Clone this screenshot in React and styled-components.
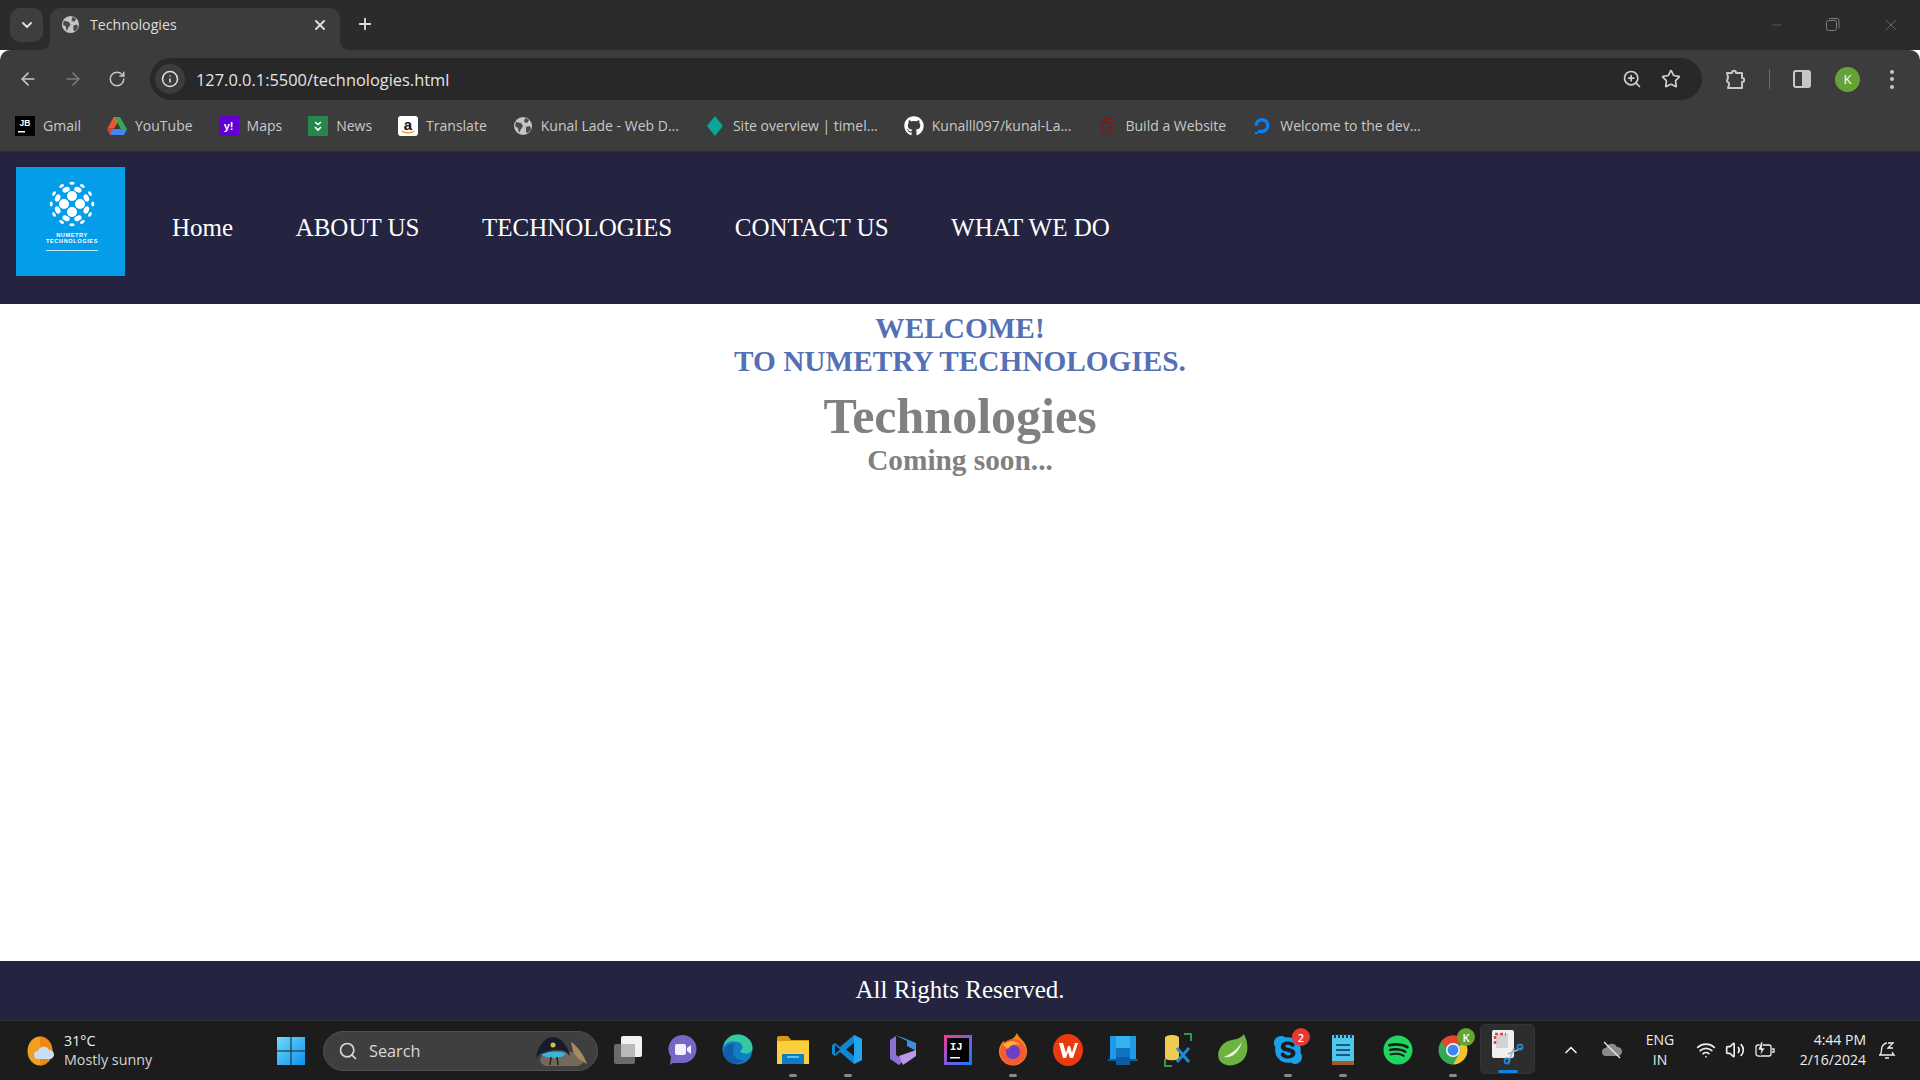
import styled, { createGlobalStyle } from "styled-components";
import {
  ArrowLeft,
  ArrowRight,
  RotateCw,
  Info,
  ZoomIn,
  Star,
  Plus,
  X,
  ChevronDown,
  ChevronUp,
  Search,
  Wifi,
  Volume2,
  Minus,
} from "lucide-react";
import { FaGithub, FaSpotify, FaSkype } from "react-icons/fa";

const GlobalStyle = createGlobalStyle`
  html, body { margin: 0; padding: 0; background: #fff; }
  * { box-sizing: border-box; }
`;

const UI_FONT = `"Open Sans", "Noto Sans", sans-serif`;
const NAVY = "#242440";

const Page = styled.div`
  width: 1920px;
  height: 1080px;
  display: flex;
  flex-direction: column;
  overflow: hidden;
  font-family: "Liberation Serif", serif;
`;

/* browser chrome */
const TabStrip = styled.div`
  height: 50px;
  background: #2b2b2b;
  display: flex;
  align-items: flex-end;
  padding-left: 10px;
  color: #dcdcdc;
  font-family: ${UI_FONT};
`;
const TabListButton = styled.div`
  width: 33px;
  height: 34px;
  margin: 0 7px 8px 0;
  border-radius: 10px;
  background: #3e3e3e;
  display: flex;
  align-items: center;
  justify-content: center;
`;
const Tab = styled.div`
  position: relative;
  width: 290px;
  height: 42px;
  background: #3c3c3c;
  border-radius: 11px 11px 0 0;
  display: flex;
  align-items: center;
  padding: 0 12px 9px 11px;
  gap: 10px;
  font-size: 14.2px;
  &::before,
  &::after {
    content: "";
    position: absolute;
    bottom: 0;
    width: 10px;
    height: 10px;
  }
  &::before {
    left: -10px;
    background: radial-gradient(circle at 0 0, transparent 10px, #3c3c3c 10.5px);
  }
  &::after {
    right: -10px;
    background: radial-gradient(circle at 100% 0, transparent 10px, #3c3c3c 10.5px);
  }
`;
const TabTitle = styled.span`
  flex: 1;
`;
const NewTab = styled.div`
  margin: 0 0 17px 16px;
  display: flex;
`;
const WindowControls = styled.div`
  margin: 0 20px 16px auto;
  display: flex;
  align-items: center;
  gap: 42px;
  color: #7d7d7d;
`;
const Toolbar = styled.div`
  height: 52px;
  background: #3c3c3c;
  border-radius: 10px 10px 0 0;
  display: flex;
  align-items: center;
  padding: 0 26px 0 18px;
  color: #c7c7c7;
`;
const NavButtons = styled.div`
  display: flex;
  align-items: center;
  gap: 25px;
  margin: 5px 24px 0 0;
`;
const Omnibox = styled.div`
  flex: 1;
  height: 42px;
  margin-top: 6px;
  border-radius: 21px;
  background: #282828;
  display: flex;
  align-items: center;
  padding: 0 21px 0 5px;
  font-family: ${UI_FONT};
  font-size: 16.4px;
  color: #e4e4e4;
`;
const InfoChip = styled.div`
  width: 30px;
  height: 30px;
  border-radius: 50%;
  background: #3c3c3c;
  display: flex;
  align-items: center;
  justify-content: center;
  margin-right: 11px;
`;
const OmniboxEnd = styled.div`
  margin-left: auto;
  display: flex;
  align-items: center;
  gap: 19px;
`;
const ToolbarEnd = styled.div`
  display: flex;
  align-items: center;
  margin: 6px 0 0 23px;
`;
const Divider = styled.div`
  width: 1px;
  height: 20px;
  margin: 0 23px;
  background: #686868;
`;
const Avatar = styled.div`
  width: 25px;
  height: 25px;
  margin: 0 30px 0 24px;
  border-radius: 50%;
  background: #65a338;
  color: #fff;
  font: 13px ${UI_FONT};
  display: flex;
  align-items: center;
  justify-content: center;
`;
const Dots = styled.div`
  display: flex;
  flex-direction: column;
  gap: 3.5px;
  span {
    width: 4px;
    height: 4px;
    border-radius: 50%;
    background: #c7c7c7;
  }
`;
const BookmarkBar = styled.div`
  height: 50px;
  background: #3c3c3c;
  display: flex;
  align-items: center;
  padding: 0 0 2px 15px;
  gap: 26px;
  font-family: ${UI_FONT};
  font-size: 14px;
  color: #c9c9c9;
  border-bottom: 1px solid #2d2d2d;
`;
const Bookmark = styled.div`
  display: flex;
  align-items: center;
  gap: 8px;
  white-space: nowrap;
`;
const Favicon = styled.div`
  width: 20px;
  height: 20px;
  flex: none;
  display: flex;
  align-items: center;
  justify-content: center;
  border-radius: ${(p) => p.$radius || 0}px;
  background: ${(p) => p.$bg || "transparent"};
  color: ${(p) => p.$color || "#fff"};
  font: 700 11px "Liberation Sans", sans-serif;
`;

/* the site */
const SiteNav = styled.nav`
  height: 152px;
  flex: none;
  background: ${NAVY};
  display: flex;
  align-items: flex-start;
  padding: 15px 0 0 16px;
`;
const LogoBox = styled.div`
  width: 109px;
  height: 109px;
  background: #049de9;
  display: flex;
  flex-direction: column;
  align-items: center;
  padding: 14px 0 0 3px;
  color: #fff;
  font: 700 5.6px/6.4px "Liberation Sans", sans-serif;
  letter-spacing: 0.6px;
  text-align: center;
`;
const LogoRule = styled.div`
  width: 52px;
  height: 1px;
  margin-top: 5px;
  background: #bfe6fb;
`;
const LogoText = styled.div`
  margin-top: 5px;
`;
const NavLinks = styled.div`
  display: flex;
  gap: 62.5px;
  margin: 46px 0 0 47px;
  font-size: 25px;
  line-height: 30px;
  color: #fff;
`;
const Main = styled.main`
  flex: 1;
  background: #fff;
  text-align: center;
  padding-top: 8px;
`;
const Welcome = styled.h2`
  margin: 0;
  font-size: 29.3px;
  line-height: 33px;
  font-weight: 700;
  color: #5570b5;
`;
const Title = styled.h1`
  margin: 11px 0 0;
  font-size: 50px;
  line-height: 54px;
  font-weight: 700;
  color: #808080;
`;
const Subtitle = styled.h3`
  margin: 0;
  font-size: 29.3px;
  line-height: 35px;
  font-weight: 700;
  color: #808080;
`;
const SiteFooter = styled.footer`
  height: 59px;
  flex: none;
  background: ${NAVY};
  color: #fff;
  font-size: 25px;
  display: flex;
  align-items: center;
  justify-content: center;
  padding-bottom: 2px;
`;

/* windows taskbar */
const Taskbar = styled.div`
  height: 60px;
  flex: none;
  background: #1c1c1c;
  border-top: 1px solid #333;
  display: flex;
  align-items: center;
  padding-left: 27px;
  color: #eee;
  font-family: ${UI_FONT};
`;
const Weather = styled.div`
  width: 249px;
  display: flex;
  align-items: center;
  gap: 9px;
`;
const WeatherText = styled.div`
  margin-top: -2px;
  font-size: 14.3px;
  line-height: 19px;
  small {
    display: block;
    font-size: 14.3px;
    color: #d4d4d4;
  }
`;
const SearchPill = styled.div`
  width: 275px;
  height: 40px;
  margin: 0 2px 0 17px;
  border-radius: 20px;
  background: #3f3f3f;
  border: 1px solid #505050;
  display: flex;
  align-items: center;
  padding: 0 7px 0 14px;
  gap: 11px;
  font-size: 16.3px;
  color: #d8d8d8;
  svg:last-child {
    margin-left: auto;
  }
`;
const Apps = styled.div`
  display: flex;
  height: 100%;
`;
const AppSlot = styled.div`
  position: relative;
  width: 55px;
  height: 100%;
  display: flex;
  align-items: center;
  justify-content: center;
  padding-bottom: 2px;
  border-radius: 5px;
  &::after {
    content: "";
    display: ${(p) => (p.$mark ? "block" : "none")};
    position: absolute;
    bottom: 3px;
    left: 50%;
    width: ${(p) => (p.$mark === "active" ? 20 : 8)}px;
    height: 3px;
    margin-left: ${(p) => (p.$mark === "active" ? -10 : -4)}px;
    border-radius: 2px;
    background: ${(p) => (p.$mark === "active" ? "#0a84e8" : "#8a8a8a")};
  }
`;
const ActiveApp = styled(AppSlot)`
  margin: 3px 0;
  height: 50px;
  background: #2d2d2d;
  border: 1px solid #343434;
  &::after {
    bottom: 0;
  }
`;
const Badge = styled.div`
  position: absolute;
  top: 7px;
  right: 5px;
  min-width: 18px;
  height: 18px;
  border-radius: 50%;
  background: ${(p) => p.$bg};
  color: #fff;
  font-size: 11px;
  font-weight: 600;
  display: flex;
  align-items: center;
  justify-content: center;
`;
const Tray = styled.div`
  margin-left: auto;
  display: flex;
  align-items: center;
  padding: 0 24px 2px 0;
  color: #eee;
`;
const CloudSlot = styled.div`
  display: flex;
  margin-left: 20px;
`;
const Lang = styled.div`
  width: 48px;
  margin: 0 12px 0 13px;
  text-align: center;
  font-size: 14px;
  line-height: 20px;
`;
const TrayIcons = styled.div`
  display: flex;
  align-items: center;
  gap: 9px;
`;
const Clock = styled.div`
  width: 90px;
  margin: 0 12px 0 0;
  text-align: right;
  font-size: 14px;
  line-height: 20px;
`;

function Globe({ size = 20 }) {
  return (
    <svg width={size} height={size} viewBox="0 0 20 20">
      <circle cx="10" cy="10" r="9" fill="#c4c4c4" />
      <path d="M3 6l5 1 2 3-2 3-2 4-1-5-3-2zM12 2l4 2-2 3-3-1zM13 11l4-1 1 3-3 4-2-1z" fill="#4a4a4a" />
    </svg>
  );
}

function Drive() {
  return (
    <svg width="20" height="18" viewBox="0 0 20 18">
      <path d="M7 0h6l-3 6-3 5H1z" fill="#fbbc04" />
      <path d="M7 0h6l7 12h-6z" fill="#34a853" />
      <path d="M5 12h15l-3 6H3z" fill="#4285f4" />
      <path d="M7 0l3 6-5 8-2 4-3-6z" fill="#ea4335" opacity="0.85" />
    </svg>
  );
}

function JetBrains() {
  return (
    <svg width="20" height="20" viewBox="0 0 20 20">
      <rect width="20" height="20" fill="#000" />
      <text x="10" y="10" textAnchor="middle" fontSize="8.500" fontWeight="700" fontFamily="Liberation Sans, sans-serif" fill="#fff">
        JB
      </text>
      <rect x="3" y="15" width="7" height="1.500" fill="#fff" />
    </svg>
  );
}

function NewsMark() {
  return (
    <svg width="20" height="20" viewBox="0 0 20 20" fill="none" stroke="#fff" strokeWidth="1.600">
      <rect width="20" height="20" fill="#25874a" stroke="none" />
      <path d="M7 6l3 2.500L13 6M7 11l3 3 3-3" />
    </svg>
  );
}

function AmazonMark() {
  return (
    <svg width="20" height="20" viewBox="0 0 20 20">
      <rect width="20" height="20" rx="3" fill="#fff" />
      <text x="10" y="13.500" textAnchor="middle" fontSize="15" fontWeight="700" fontFamily="Liberation Sans, sans-serif" fill="#111">
        a
      </text>
      <path d="M4 15c3 2.500 9 2.500 12 0" fill="none" stroke="#f59a23" strokeWidth="1.500" />
    </svg>
  );
}

function Ball() {
  const mid = [22.5, 67.5, 112.5, 157.5, 202.5, 247.5, 292.5, 337.5];
  const outer = [0, 30, 60, 90, 120, 150, 180, 210, 240, 270, 300, 330];
  return (
    <svg width="46" height="46" viewBox="-23 -23 46 46">
      <g fill="#fff">
        <circle cx="0" cy="-8" r="5" />
        <circle cx="-8" cy="0" r="5" />
        <circle cx="8" cy="0" r="5" />
        <circle cx="0" cy="8" r="5" />
        {mid.map((a) => (
          <ellipse key={a} rx="3.8" ry="2.6" transform={`rotate(${a}) translate(15.5 0) rotate(90)`} />
        ))}
        {outer.map((a) => (
          <ellipse key={a} rx="2.6" ry="1.5" transform={`rotate(${a}) translate(20.8 0) rotate(90)`} />
        ))}
      </g>
    </svg>
  );
}

function Puzzle() {
  return (
    <svg width="21" height="21" viewBox="0 0 21 21" fill="none" stroke="#c7c7c7" strokeWidth="2" strokeLinejoin="round">
      <path d="M2 4h5c0-3 4-3 4 0h6v5c3 0 3 4 0 4v6H3c0 0 1-2 1-4s-2-2-2-3 1-2 1-4z" />
    </svg>
  );
}

function SidePanel() {
  return (
    <svg width="18" height="18" viewBox="0 0 18 18">
      <rect x="1" y="1" width="16" height="16" rx="2" fill="none" stroke="#c7c7c7" strokeWidth="2" />
      <rect x="9" y="1" width="8" height="16" rx="1" fill="#c7c7c7" />
    </svg>
  );
}

function Restore() {
  return (
    <svg width="14" height="14" viewBox="0 0 14 14" fill="none" stroke="#7d7d7d">
      <rect x="0.5" y="2.5" width="10" height="10" rx="2" />
      <path d="M3 .5h8a2 2 0 0 1 2 2v8" />
    </svg>
  );
}

function SunCloud() {
  return (
    <svg width="28" height="30" viewBox="0 0 28 30">
      <ellipse cx="13" cy="15" rx="12.5" ry="14.5" fill="#f0a020" />
      <path d="M13 .5A12.5 14.5 0 0 1 13 29.5z" fill="#ee7b15" opacity="0.7" />
      <path d="M11 23a4 4 0 0 1 0-8 6 6 0 0 1 11-1 4.500 4.500 0 0 1 1 9z" fill="#c9def5" />
    </svg>
  );
}

function StartLogo() {
  return (
    <svg width="30" height="30" viewBox="0 0 30 30">
      <defs>
        <linearGradient id="win" x1="0" y1="0" x2="1" y2="1">
          <stop offset="0" stopColor="#6fdcfb" />
          <stop offset="1" stopColor="#0d8fee" />
        </linearGradient>
      </defs>
      <path d="M1 1h13.500v13.500H1zM15.500 1H29v13.500H15.500zM1 15.500h13.500V29H1zM15.500 15.500H29V29H15.500z" fill="url(#win)" />
    </svg>
  );
}

function Mascot() {
  return (
    <svg width="58" height="30" viewBox="0 0 58 30">
      <ellipse cx="30" cy="24" rx="22" ry="9" fill="#74685a" />
      <path d="M4 22C6 8 14 1 21 1s15 8 17 19c-5-6-9-7-17-6S8 17 4 22z" fill="#141c2e" />
      <path d="M9 19c6-4 18-5 25-1-4 3-7 4-12 4s-9-1-13-3z" fill="#38b7d8" />
      <path d="M19 21l-1 8M25 21l1 8" stroke="#222" strokeWidth="1.500" />
      <circle cx="21" cy="9" r="2.500" fill="#d8c33a" />
      <path d="M39 6c5 3 12 11 16 22-6-3-12-7-14-13z" fill="#a98a60" />
    </svg>
  );
}

function TaskView() {
  return (
    <svg width="30" height="30" viewBox="0 0 30 30">
      <rect x="1" y="9" width="21" height="20" rx="2" fill="#6b6b6b" />
      <rect x="8" y="1" width="21" height="21" rx="2" fill="#f2f2f2" />
      <rect x="8" y="9" width="14" height="13" fill="#b9b9b9" />
    </svg>
  );
}

function Meet() {
  return (
    <svg width="29" height="32" viewBox="0 0 29 32">
      <path d="M14.500 1a14 14 0 0 1 0 28H5l-3 2 1-8A14 14 0 0 1 14.500 1z" fill="#7667c4" />
      <rect x="7" y="10" width="11" height="11" rx="2" fill="#f2f0ff" />
      <path d="M19 14l4-3v9l-4-3z" fill="#f2f0ff" />
    </svg>
  );
}

function Edge() {
  return (
    <svg width="31" height="31" viewBox="0 0 31 31">
      <circle cx="15.500" cy="15.500" r="15" fill="#0f7ec4" />
      <path d="M1 13C3 5 9 .5 16 .5c8 0 14.500 6 14.500 13 0 4-3 6-7 6-3 0-5-1-5-3 3-1 3-6-1-8C11 6 4 8 1 13z" fill="#36c9a0" />
      <path d="M11 17c0 6 5 10 11 9-3 3-8 5-13 3C4 27 1 21 2 16c2-5 7-7 11-6-1 2-2 4-2 7z" fill="#125ea8" />
    </svg>
  );
}

function Folder() {
  return (
    <svg width="32" height="30" viewBox="0 0 32 30">
      <path d="M0 3a2 2 0 0 1 2-2h9l3 4h18v4H0z" fill="#d99a10" />
      <rect y="6" width="32" height="23" fill="#fbcf3d" />
      <rect x="5" y="19" width="22" height="10" rx="1" fill="#0f7cc8" />
      <rect x="10" y="21" width="12" height="2" fill="#63bdf0" />
    </svg>
  );
}

function VsCode() {
  return (
    <svg width="31" height="31" viewBox="0 0 31 31">
      <path d="M22 1l8 4v21l-8 4-14-12-5 4-3-2v-9l3-2 5 4z" fill="#0e87d2" />
      <path d="M22 1l8 4v21l-8 4z" fill="#23a5ec" />
      <path d="M22 9l-8 6.500 8 6.500z" fill="#1c1c1c" />
      <path d="M3 11l5 4.500-5 4.500z" fill="#1c1c1c" />
    </svg>
  );
}

function Copilot() {
  return (
    <svg width="28" height="32" viewBox="0 0 28 32">
      <path d="M6 1l9 3 12 5v8l-9-5V7z" fill="#3d8fd8" />
      <path d="M1 6l6-4v19l8 5-5 5-9-6z" fill="#8e70d0" />
      <path d="M10 22l17-6v6l-13 9z" fill="#b99ae8" />
      <path d="M12 12l7 3-7 4z" fill="#1c1c1c" />
    </svg>
  );
}

function IdeaLogo() {
  return (
    <svg width="28" height="30" viewBox="0 0 28 30">
      <defs>
        <linearGradient id="ij" x1="0" y1="0" x2="1" y2="1">
          <stop offset="0" stopColor="#fc3a86" />
          <stop offset="0.5" stopColor="#7c5ce0" />
          <stop offset="1" stopColor="#0e7bf2" />
        </linearGradient>
      </defs>
      <rect width="28" height="30" fill="url(#ij)" />
      <rect x="3" y="3" width="22" height="24" fill="#000" />
      <text x="6" y="15" fontSize="10.500" fontWeight="700" fontFamily="Liberation Mono, monospace" fill="#fff">
        IJ
      </text>
      <rect x="6" y="22" width="10" height="1.500" fill="#fff" />
    </svg>
  );
}

function Firefox() {
  return (
    <svg width="30" height="34" viewBox="0 0 30 34">
      <path d="M19 0c1 5 10 8 10 18a14 14 0 0 1-28 1c0-5 2-9 5-11l1 4c3-5 9-5 12-12z" fill="#f88916" />
      <circle cx="15" cy="19" r="13" fill="#f5553a" opacity="0.85" />
      <circle cx="15" cy="19" r="7" fill="#6a3ec6" />
      <path d="M5 12c4-5 13-5 18 0-5-2-11 0-13 4z" fill="#ffb12a" />
    </svg>
  );
}

function Wps() {
  return (
    <svg width="30" height="32" viewBox="0 0 30 32">
      <ellipse cx="15" cy="16" rx="15" ry="16" fill="#ea3a10" />
      <path d="M6 9h4l3 10 2-7h2l2 7 3-10h3l-5 15h-3l-2-6-2 6h-3z" fill="#fff" />
    </svg>
  );
}

function PhoneLink() {
  return (
    <svg width="30" height="30" viewBox="0 0 30 30">
      <rect x="2" y="1" width="26" height="25" fill="#1e9ae6" />
      <rect x="0" y="24" width="30" height="2" fill="#0a5da3" />
      <rect x="8" y="1" width="14" height="29" fill="#0f74c4" />
      <rect x="8" y="1" width="14" height="12" fill="#35b2ee" />
      <rect x="8" y="22" width="14" height="8" fill="#0a5da3" />
    </svg>
  );
}

function DbTool() {
  return (
    <svg width="30" height="36" viewBox="0 0 30 36">
      <path d="M2 6c0-4 14-4 14 0v20c0 3-14 3-14 0z" fill="#f0cb52" />
      <path d="M21 2h7v7M2 27v7h7" fill="none" stroke="#2f9a47" strokeWidth="2" />
      <path d="M14 30l12-14M26 30L14 16" stroke="#1c8ad8" strokeWidth="3" />
    </svg>
  );
}

function SpringLeaf() {
  return (
    <svg width="30" height="32" viewBox="0 0 30 32">
      <path d="M26 0c6 12 4 24-5 29-7 4-15 3-19-2C-2 21 1 12 8 8c6-3 14-2 18-8z" fill="#6db33f" />
      <path d="M24 8C18 17 12 20 6 23c6 1 14-2 18-15z" fill="#e9f4df" />
    </svg>
  );
}

function Notepad() {
  return (
    <svg width="24" height="32" viewBox="0 0 24 32">
      <rect x="1" y="1" width="22" height="30" rx="1" fill="#52c6ea" />
      <rect x="1" y="27" width="22" height="4" fill="#a55a2a" />
      <path d="M5 11h14M5 16h14M5 21h14" stroke="#0f5a8c" strokeWidth="2" />
      <path d="M4 0v4M8 0v4M12 0v4M16 0v4M20 0v4" stroke="#1c3b55" strokeWidth="2" />
    </svg>
  );
}

function Chrome() {
  return (
    <svg width="30" height="30" viewBox="0 0 30 30">
      <circle cx="15" cy="15" r="14.500" fill="#34a853" />
      <path d="M15 .5A14.500 14.500 0 0 1 27.600 8H15a7 7 0 0 0-6.500 4.500L3.300 6.500A14.500 14.500 0 0 1 15 .5z" fill="#ea4335" />
      <path d="M27.600 8A14.500 14.500 0 0 1 15 29.500L21 19a7 7 0 0 0 0-8z" fill="#fbc02d" />
      <circle cx="15" cy="15" r="7" fill="#fff" />
      <circle cx="15" cy="15" r="5.500" fill="#4285f4" />
    </svg>
  );
}

function SnipTool() {
  return (
    <svg width="32" height="36" viewBox="0 0 32 36">
      <rect x="0" y="0" width="22" height="28" rx="2" fill="#f0f0f0" />
      <rect x="4" y="4" width="12" height="14" fill="#d3d3d3" />
      <path d="M3 14V4h11" fill="none" stroke="#d94a3a" strokeWidth="2.500" strokeDasharray="3 2" />
      <path d="M16 34l6-16M30 18L16 24" stroke="#9fb4c6" strokeWidth="1.500" />
      <circle cx="15" cy="31" r="2.500" fill="none" stroke="#1c86d8" strokeWidth="1.800" />
      <circle cx="28" cy="17" r="2.500" fill="none" stroke="#1c86d8" strokeWidth="1.800" />
    </svg>
  );
}

function MutedCloud() {
  return (
    <svg width="22" height="18" viewBox="0 0 22 18">
      <path d="M5 15a4 4 0 0 1 0-8 6 6 0 0 1 11-1 4.500 4.500 0 0 1 1 9z" fill="#8a8a8a" />
      <path d="M3 1l16 16" stroke="#eee" strokeWidth="1.300" />
    </svg>
  );
}

function Battery() {
  return (
    <svg width="22" height="18" viewBox="0 0 22 18" fill="none" stroke="#eee" strokeWidth="1.300">
      <rect x="2" y="4" width="15" height="11" rx="2" />
      <path d="M18 8h2v3h-2" />
      <path d="M7 1L4 9h3l-1 6 5-8H8l1-6z" fill="#eee" stroke="#1c1c1c" strokeWidth="0.700" />
    </svg>
  );
}

function Bell() {
  return (
    <svg width="18" height="20" viewBox="0 0 18 20" fill="none" stroke="#eee" strokeWidth="1.300">
      <path d="M2 15c2-2 1-5 2-8s4-4 5-4M1 15h15c-1-1-1.500-2-1.700-3M7 18h4" />
      <path d="M10 3h5l-5 5h5" />
    </svg>
  );
}

const bookmarks = [
  { label: "Gmail", icon: <JetBrains /> },
  { label: "YouTube", icon: <Favicon><Drive /></Favicon> },
  { label: "Maps", icon: <Favicon $bg="#5f01d1">y!</Favicon> },
  { label: "News", icon: <NewsMark /> },
  { label: "Translate", icon: <AmazonMark /> },
  { label: "Kunal Lade - Web D...", icon: <Globe /> },
  {
    label: "Site overview | timel...",
    icon: (
      <svg width="20" height="20" viewBox="0 0 20 20">
        <path d="M10 0l8 10-8 10-8-10z" fill="#0aa596" />
      </svg>
    ),
  },
  { label: "Kunalll097/kunal-La...", icon: <FaGithub size={20} color="#fff" /> },
  {
    label: "Build a Website",
    icon: (
      <svg width="20" height="20" viewBox="0 0 20 20" fill="none" stroke="#8f1212" strokeWidth="1.500">
        <path d="M15 2C9 2 5 5 4 10s2 8 6 8M8 7c3-2 7-1 7 2s-3 3-5 3l6 6" />
      </svg>
    ),
  },
  {
    label: "Welcome to the dev...",
    icon: (
      <svg width="20" height="20" viewBox="0 0 20 20" fill="none">
        <path d="M10 17a7.500 7.500 0 1 0-7.500-7.500h3.500a4 4 0 1 1 4 4z" fill="#0a80f5" />
        <path d="M6 14h4v3H6zM3 16h3v2H3z" fill="#0a80f5" />
      </svg>
    ),
  },
];

const apps = [
  { key: "task", el: <TaskView /> },
  { key: "meet", el: <Meet /> },
  { key: "edge", el: <Edge /> },
  { key: "folder", el: <Folder />, mark: "open" },
  { key: "vscode", el: <VsCode />, mark: "open" },
  { key: "copilot", el: <Copilot /> },
  { key: "idea", el: <IdeaLogo /> },
  { key: "firefox", el: <Firefox />, mark: "open" },
  { key: "wps", el: <Wps /> },
  { key: "phone", el: <PhoneLink /> },
  { key: "db", el: <DbTool /> },
  { key: "spring", el: <SpringLeaf /> },
  { key: "skype", el: <FaSkype size={32} color="#1a9fe8" />, mark: "open", badge: "2", badgeBg: "#e8392e" },
  { key: "notes", el: <Notepad />, mark: "open" },
  { key: "spotify", el: <FaSpotify size={30} color="#1ed760" /> },
  { key: "chrome", el: <Chrome />, mark: "open", badge: "K", badgeBg: "#65a338" },
];

const navLinks = ["Home", "ABOUT US", "TECHNOLOGIES", "CONTACT US", "WHAT WE DO"];

export default function App() {
  return (
    <Page>
      <GlobalStyle />
      <TabStrip>
        <TabListButton>
          <ChevronDown size={16} strokeWidth={3} />
        </TabListButton>
        <Tab>
          <Globe size={19} />
          <TabTitle>Technologies</TabTitle>
          <X size={16} strokeWidth={3} />
        </Tab>
        <NewTab>
          <Plus size={18} strokeWidth={2.5} />
        </NewTab>
        <WindowControls>
          <Minus size={14} strokeWidth={1} />
          <Restore />
          <X size={18} strokeWidth={1} />
        </WindowControls>
      </TabStrip>

      <Toolbar>
        <NavButtons>
          <ArrowLeft size={20} strokeWidth={2} />
          <ArrowRight size={20} strokeWidth={2} color="#7a7a7a" />
          <RotateCw size={18} strokeWidth={2} />
        </NavButtons>
        <Omnibox>
          <InfoChip>
            <Info size={18} strokeWidth={2} color="#e0e0e0" />
          </InfoChip>
          127.0.0.1:5500/technologies.html
          <OmniboxEnd>
            <ZoomIn size={20} strokeWidth={2} color="#d0d0d0" />
            <Star size={20} strokeWidth={2} color="#d0d0d0" />
          </OmniboxEnd>
        </Omnibox>
        <ToolbarEnd>
          <Puzzle />
          <Divider />
          <SidePanel />
          <Avatar>K</Avatar>
          <Dots>
            <span />
            <span />
            <span />
          </Dots>
        </ToolbarEnd>
      </Toolbar>

      <BookmarkBar>
        {bookmarks.map((b) => (
          <Bookmark key={b.label}>
            {b.icon}
            {b.label}
          </Bookmark>
        ))}
      </BookmarkBar>

      <SiteNav>
        <LogoBox>
          <Ball />
          <LogoText>
            NUMETRY
            <br />
            TECHNOLOGIES
          </LogoText>
          <LogoRule />
        </LogoBox>
        <NavLinks>
          {navLinks.map((l) => (
            <span key={l}>{l}</span>
          ))}
        </NavLinks>
      </SiteNav>

      <Main>
        <Welcome>
          WELCOME!
          <br />
          TO NUMETRY TECHNOLOGIES.
        </Welcome>
        <Title>Technologies</Title>
        <Subtitle>Coming soon...</Subtitle>
      </Main>

      <SiteFooter>All Rights Reserved.</SiteFooter>

      <Taskbar>
        <Weather>
          <SunCloud />
          <WeatherText>
            31°C
            <small>Mostly sunny</small>
          </WeatherText>
        </Weather>
        <StartLogo />
        <SearchPill>
          <Search size={20} />
          Search
          <Mascot />
        </SearchPill>
        <Apps>
          {apps.map((a) => (
            <AppSlot key={a.key} $mark={a.mark}>
              {a.el}
              {a.badge && <Badge $bg={a.badgeBg}>{a.badge}</Badge>}
            </AppSlot>
          ))}
          <ActiveApp $mark="active">
            <SnipTool />
          </ActiveApp>
        </Apps>
        <Tray>
          <ChevronUp size={20} strokeWidth={2} />
          <CloudSlot>
            <MutedCloud />
          </CloudSlot>
          <Lang>
            ENG
            <br />
            IN
          </Lang>
          <TrayIcons>
            <Wifi size={20} />
            <Volume2 size={20} />
            <Battery />
          </TrayIcons>
          <Clock>
            4:44 PM
            <br />
            2/16/2024
          </Clock>
          <Bell />
        </Tray>
      </Taskbar>
    </Page>
  );
}
